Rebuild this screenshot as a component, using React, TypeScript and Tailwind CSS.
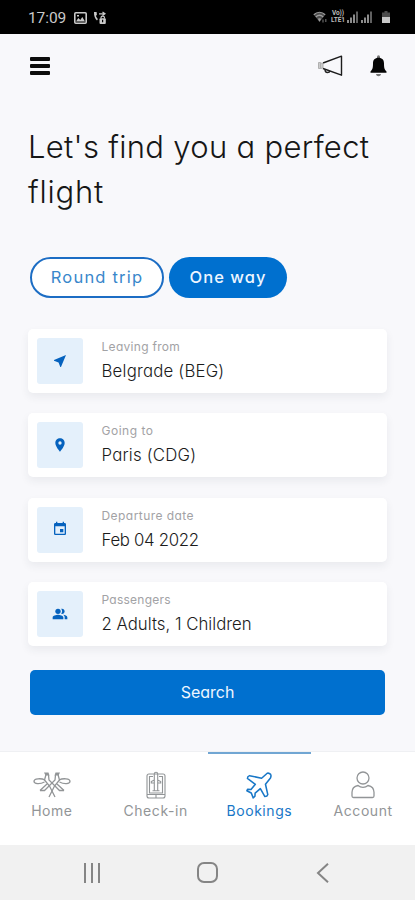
import type { ReactNode } from "react";
import type { IconType } from "react-icons";
import { MdEvent, MdLocationOn, MdNearMe, MdPeopleAlt } from "react-icons/md";

type Field = {
  label: string;
  value: string;
  icon: IconType;
  labelClass: string;
  valueClass: string;
};

const fields: Field[] = [
  {
    label: "Leaving from",
    value: "Belgrade (BEG)",
    icon: MdNearMe,
    labelClass: "tracking-[0.3px]",
    valueClass: "tracking-[0.2px]",
  },
  {
    label: "Going to",
    value: "Paris (CDG)",
    icon: MdLocationOn,
    labelClass: "tracking-[0.5px]",
    valueClass: "tracking-[0.2px]",
  },
  {
    label: "Departure date",
    value: "Feb 04 2022",
    icon: MdEvent,
    labelClass: "tracking-[0.45px]",
    valueClass: "tracking-[-0.3px]",
  },
  {
    label: "Passengers",
    value: "2 Adults, 1 Children",
    icon: MdPeopleAlt,
    labelClass: "tracking-[0.25px]",
    valueClass: "tracking-[0px]",
  },
];

const StatusBar = () => (
  <div className="flex h-[34px] items-center justify-between bg-black pl-7 pr-[25px] text-[#c9c9c9]">
    <div className="flex items-center">
      <span className="mt-[3px] w-[46px] font-[Roboto,sans-serif] text-[15.5px] tracking-[-0.1px]">
        17:09
      </span>
      <svg width="13" height="12" viewBox="0 0 13 12" className="mt-px">
        <rect x="0.8" y="0.8" width="11.4" height="10.4" rx="1" fill="none" stroke="currentColor" strokeWidth="1.6" />
        <path d="M2 9.5 4.3 6l2 2 2-3 2.7 4.5zM3 3h2v1.5H3z" fill="currentColor" />
      </svg>
      <svg width="14" height="14" viewBox="0 0 14 14" className="ml-[6px] mt-px">
        <path d="M1 1h2.6l.3 3-1 .8c.5 1.4 1 2.3 2 3.2L4 9.4C2 7.6.8 5 1 1z" fill="currentColor" />
        <path d="M6 2.8h5M9.5 1 12 2.8 9.5 4.6" fill="none" stroke="currentColor" strokeWidth="1.2" />
        <path d="M8 7.5V6.8a1.7 1.7 0 0 1 3.5 0v.7" fill="none" stroke="currentColor" strokeWidth="1.2" />
        <rect x="6.5" y="7.2" width="6.3" height="5.8" rx="1" fill="currentColor" />
        <path d="M9.6 8.8v2.4" stroke="#000" strokeWidth="1.2" />
      </svg>
    </div>
    <div className="flex items-center text-[#9c9c9c]">
      <svg width="15" height="13" viewBox="0 0 15 13">
        <path d="M.8 3.8c3.4-3.2 8-3.2 11.4 0L6.5 11z" fill="#4c4c4c" />
        <path d="M.8 3.8c3.4-3.2 8-3.2 11.4 0M2.8 6c2.2-2 5.2-2 7.4 0" fill="none" stroke="currentColor" strokeWidth="1.4" />
        <path d="M4.8 7.8c1-.8 2.4-.8 3.4 0L6.5 10.8z" fill="currentColor" />
        <path d="M10 8.5v3M12.8 8v3" stroke="#666" strokeWidth="1.2" />
      </svg>
      <div className="ml-[2px] flex w-4 flex-col items-center font-[Roboto,sans-serif] text-[6.5px] font-bold leading-[7px] tracking-[-0.1px] text-[#bbb]">
        <span>Vo))</span>
        <span>LTE1</span>
      </div>
      <svg width="11" height="12" viewBox="0 0 11 12" className="ml-px">
        <path d="M0 9h2v3H0zM3 6.5h2V12H3zM6 3.5h2V12H6z" fill="#8c8c8c" />
        <path d="M9 .5h2V12H9z" fill="#606060" />
      </svg>
      <svg width="11" height="12" viewBox="0 0 11 12" className="ml-[3px]">
        <path d="M0 9h2v3H0zM3 6.5h2V12H3zM6 3.5h2V12H6z" fill="#8c8c8c" />
        <path d="M9 .5h2V12H9z" fill="#606060" />
      </svg>
      <svg width="8" height="12" viewBox="0 0 8 12" className="ml-[10px]">
        <path d="M2.5 0h3v1.5H8V6H0V1.5h2.5z" fill="#4c4c4c" />
        <path d="M0 6h8v6H0z" fill="#c8c8c8" />
      </svg>
    </div>
  </div>
);

const Header = () => (
  <header className="flex h-[64px] items-center justify-between pl-[30px] pr-[28px]">
    <button className="flex flex-col gap-[3px]" aria-label="Menu">
      <span className="h-1 w-5 rounded-[1px] bg-[#0c0c0c]" />
      <span className="h-1 w-5 rounded-[1px] bg-[#0c0c0c]" />
      <span className="h-1 w-5 rounded-[1px] bg-[#0c0c0c]" />
    </button>
    <div className="flex items-center gap-[27px]">
      <svg width="26" height="22" viewBox="0 0 26 22" fill="none">
        <path d="M6 8 24.5 1.2v19L6 13.5" stroke="#1c1c1c" strokeWidth="1.4" strokeLinejoin="round" />
        <path d="M1.5 7.5h2v6h-2zM3.5 8 6 8.5V13l-2.5.5" fill="#ccc" stroke="#b0b0b0" strokeWidth="1" />
        <path d="M8 14.5c0 2 .8 3 2.4 3s2.4-.7 2.6-1.7" stroke="#222" strokeWidth="1.4" />
      </svg>
      <svg width="17" height="22" viewBox="0 0 17 22">
        <path d="M7 4V1.8a1.5 1.5 0 0 1 3 0V4z" fill="#777" />
        <path d="M8.5 2.8c3.7 0 5.5 2.2 5.5 5.7 0 4.3.5 6.2 2.5 8v1.2H.5v-1.2c2-1.8 2.5-3.7 2.5-8 0-3.5 1.8-5.7 5.5-5.7z" fill="#050505" />
        <path d="M6 19h5c-.3 1.500-1.200 2.200-2.500 2.200S6.300 20.500 6 19z" fill="#777" />
      </svg>
    </div>
  </header>
);

const FieldCard = ({ field }: { field: Field }) => {
  const Icon = field.icon;

  return (
    <div className="flex h-[64px] items-center rounded-[5px] bg-white pl-[9px] shadow-[0_4px_9px_rgba(40,50,70,0.07)]">
      <div className="flex size-[46px] items-center justify-center rounded-[3px] bg-[#e4f0fb]">
        <Icon className="mb-px size-4 text-[#0562be]" />
      </div>
      <div className="ml-[18.5px] flex flex-col">
        <span className={`text-[12px] leading-[18px] text-[#a2a2a5] ${field.labelClass}`}>
          {field.label}
        </span>
        <span className={`mt-[2px] text-[16.8px] font-light leading-[26px] text-[#1b1b1b] ${field.valueClass}`}>
          {field.value}
        </span>
      </div>
    </div>
  );
};

// Two mirrored birds with crossed tails
const HomeIcon = () => (
  <svg width="38" height="28" viewBox="0 0 38 28" fill="none" stroke="currentColor" strokeWidth="1.3">
    <path d="M13 3.5 11.500 9l5 6L22 26M15.500 4 16 9l10.500 10.500H31" />
    <path d="M25 3.500 26.500 9l-5 6L16 26M22.500 4 22 9 11.500 19.500H7" />
    <path d="M12 9C8 7 1 7.500 1 10.300s6 3 10.500.7M14 13l-7 6.500M26 9c4-2 11-1.500 11 1.300s-6 3-10.500.7M24 13l7 6.500" />
    <path d="M11 1.500h4.500l1 3h-4zM27 1.500h-4.500l-1 3h4z" fill="currentColor" stroke="none" />
  </svg>
);

const CheckInIcon = () => (
  <svg width="20" height="28" viewBox="0 0 20 28" fill="none" stroke="currentColor" strokeWidth="1.1">
    <rect x="1" y="3" width="18" height="24" rx="2" />
    <path d="M7 5.5H3.5V22h13V5.5H13M1 23.5h18M10 23.5V27" />
    <path d="M8.3 19.500V3a1.700 1.700 0 0 1 3.400 0v16.500M8.300 9l-3 1.500V12h3M11.700 9l3 1.500V12h-3M6.500 19.800h7" />
  </svg>
);

const BookingsIcon = () => (
  <svg width="28" height="28" viewBox="0 0 28 29" fill="none" stroke="currentColor" strokeWidth="1.6" strokeLinejoin="round">
    <path d="M22.5 2.3 16.7 7.5 4.2 4.8Q2 5.5 2 7.700l8.200 6.100-4.500 5.400-3.400-.4-.9 1.700L6 22.800l2 5 1.800-1.600.2-3.300 5.400-4.600 4.700 8.200q2.500 0 3-2l-2.400-10.800 5.200-6.500q1-2.300.1-3.700-1.500-1.700-3.500-1.200z" />
  </svg>
);

const AccountIcon = () => (
  <svg width="24" height="28" viewBox="0 0 24 28" fill="none" stroke="currentColor" strokeWidth="1.3">
    <circle cx="12" cy="7" r="6" />
    <path d="M7 14.5c-4 .8-6 3.3-6 6.8V25c0 1 .6 1.5 1.5 1.5h19c.9 0 1.500-.5 1.500-1.500v-3.700c0-3.500-2-6-6-6.800-2.800 2.600-7.200 2.600-10 0z" />
  </svg>
);

type TabProps = {
  label: string;
  icon: ReactNode;
  active?: boolean;
};

const Tab = ({ label, icon, active }: TabProps) => (
  <button
    className={`flex flex-1 flex-col items-center border-t-2 pt-[17px] ${
      active ? "border-[#71a6d3] text-[#1877c7]" : "border-transparent text-[#929597]"
    }`}
  >
    {icon}
    <span className="mt-[2px] text-[14px] leading-5 tracking-[0.55px]">{label}</span>
  </button>
);

const App = () => {
  return (
    <div className="flex h-[900px] w-[415px] flex-col overflow-hidden bg-[#f8f8fb] font-[Inter,'Open_Sans',sans-serif] [font-feature-settings:'cv11']">
      <StatusBar />
      <Header />

      <main className="flex flex-1 flex-col px-[28px]">
        <h1 className="mt-[26px] whitespace-nowrap text-[31px] font-light leading-[45px] tracking-[0.3px] text-[#161616]">
          Let's find you a perfect
          <br />
          <span className="tracking-[0.8px]">flight</span>
        </h1>

        <div className="ml-[2px] mt-[43px] flex gap-[5px]">
          <button className="h-[41px] w-[134px] rounded-full border-2 border-[#1c6dc4] bg-white pb-px text-[16.5px] tracking-[1.2px] text-[#3987cb]">
            Round trip
          </button>
          <button className="h-[41px] w-[118px] rounded-full bg-[#0070cf] pb-px text-[16.5px] font-medium tracking-[1px] text-[#eef6ff]">
            One way
          </button>
        </div>

        <div className="mt-[31px] flex flex-col gap-[20.4px]">
          {fields.map((field) => (
            <FieldCard key={field.label} field={field} />
          ))}
        </div>

        <button className="ml-[2px] mt-[23.5px] h-[45px] w-[355px] rounded-[5px] bg-[#0070cf] pb-px text-[16px] text-[#eef6ff]">
          Search
        </button>
      </main>

      <nav className="flex h-[94px] border-t border-[#eff0f3] bg-white">
        <Tab label="Home" icon={<HomeIcon />} />
        <Tab label="Check-in" icon={<CheckInIcon />} />
        <Tab label="Bookings" icon={<BookingsIcon />} active />
        <Tab label="Account" icon={<AccountIcon />} />
      </nav>

      <div className="flex h-[55px] items-center bg-[#f1f1f1] text-[#858585]">
        <svg width="18" height="20" viewBox="0 0 18 20" className="ml-[83px]" stroke="currentColor" strokeWidth="2">
          <path d="M2 0v20M9 0v20M16 0v20" />
        </svg>
        <div className="ml-[96px] size-[21px] rounded-[7px] border-2 border-[#858585]" />
        <svg width="13" height="20" viewBox="0 0 13 20" className="ml-[98px]" fill="none" stroke="currentColor" strokeWidth="2">
          <path d="M12 .8 2 10l10 9.2" />
        </svg>
      </div>
    </div>
  );
};

export default App;
